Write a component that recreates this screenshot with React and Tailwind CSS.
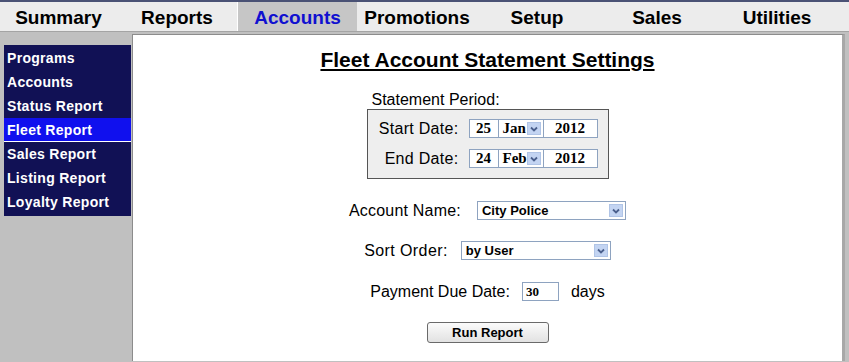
import React from "react";

const tabs = ["Summary", "Reports", "Accounts", "Promotions", "Setup", "Sales", "Utilities"];
const sideLinks = ["Programs", "Accounts", "Status Report", "Fleet Report", "Sales Report", "Listing Report", "Loyalty Report"];

function Arrow() {
  return (
    <span className="absolute right-[2px] top-[2px] bottom-[2px] w-[14px] bg-[#c3d4f2] border border-[#b0c4e6] flex items-center justify-center">
      <svg width="8" height="6" viewBox="0 0 8 6">
        <path d="M1 1.5 L4 4.5 L7 1.5" fill="none" stroke="#4a5f8c" strokeWidth="1.8" />
      </svg>
    </span>
  );
}

function DateRow({ label, day, month, year }) {
  return (
    <div className="flex items-center h-[19px]">
      <span className="w-[81px] whitespace-nowrap text-right text-[16px] leading-[19px] tracking-[0.3px]">{label}</span>
      <div className="ml-[10px] flex h-[19px] font-['Liberation_Serif',serif] font-bold text-[15px] leading-[17px]">
        <span className="w-[30px] border border-[#8ea3c0] bg-white text-center">{day}</span>
        <span className="relative w-[45px] border border-[#8ea3c0] border-l-0 bg-white pl-[4px]">
          {month}
          <Arrow />
        </span>
        <span className="w-[54px] border border-[#8ea3c0] border-l-0 bg-white text-center">{year}</span>
      </div>
    </div>
  );
}

function Select({ value, width }) {
  return (
    <span className={`relative h-[19px] ${width} border border-[#8ea3c0] bg-white pl-[4px] text-[13px] font-bold leading-[17px]`}>
      {value}
      <Arrow />
    </span>
  );
}

export default function App() {
  return (
    <div className="w-[849px] h-[362px] overflow-hidden bg-[#c0c0c0] font-['Liberation_Sans',Arial,sans-serif] text-black">
      <div className="h-[2px] bg-[#4a5275]" />
      <nav className="flex h-[30px] bg-[#ececec] border-b border-[#a4a4a4]">
        {tabs.map((t, i) => (
          <div
            key={t}
            className={
              (i === 0 ? "w-[117px] " : "w-[120px] ") +
              (t === "Accounts" ? "bg-[#c6c6c6] text-[#1010d0] border-l border-white " : "") +
              "flex items-center justify-center pt-[3px] text-[19px] font-bold"
            }
          >
            {t}
          </div>
        ))}
      </nav>
      <div className="flex h-[329px] pt-[2px] pr-[4px]">
        <aside className="w-[132px] pt-[11px] pl-[4px] pr-[1px]">
          <ul className="bg-[#111155] pt-[1px] pb-[2px]">
            {sideLinks.map((s) => (
              <li
                key={s}
                className={
                  (s === "Fleet Report" ? "bg-[#1010ee] border-b border-white " : "") +
                  "h-[24px] flex items-center pl-[3px] pt-[1px] text-white font-bold text-[14px] tracking-[0.3px]"
                }
              >
                {s}
              </li>
            ))}
          </ul>
        </aside>
        <main className="flex-1 flex flex-col items-center bg-white border-l border-t border-[#8c8c8c] border-r-[3px] border-r-[#a8a8a8]">
          <h1 className="mt-[13px] text-[21px] leading-[24px] font-bold underline">Fleet Account Statement Settings</h1>
          <div className="mt-[20px] flex flex-col">
            <span className="pl-[5px] text-[16px] leading-[16px]">Statement Period:</span>
            <div className="mt-[1px] w-[242px] h-[70px] border border-[#555] bg-[#eeeeee] pl-[10px] pt-[9px] flex flex-col gap-[11px]">
              <DateRow label="Start Date:" day="25" month="Jan" year="2012" />
              <DateRow label="End Date:" day="24" month="Feb" year="2012" />
            </div>
          </div>
          <div className="mt-[22px] flex items-center gap-[16px]">
            <span className="text-[16px] leading-[19px] tracking-[0.2px]">Account Name:</span>
            <Select value="City Police" width="w-[149px]" />
          </div>
          <div className="mt-[21px] flex items-center gap-[13px]">
            <span className="text-[16px] leading-[19px] tracking-[0.4px]">Sort Order:</span>
            <Select value="by User" width="w-[150px]" />
          </div>
          <div className="mt-[22px] flex items-center gap-[12px]">
            <span className="text-[16px] leading-[19px]">Payment Due Date:</span>
            <span className="h-[19px] w-[37px] border border-[#8ea3c0] bg-white pl-[3px] font-['Liberation_Serif',serif] font-bold text-[13px] leading-[17px]">30</span>
            <span className="text-[16px] leading-[19px]">days</span>
          </div>
          <button className="mt-[21px] w-[122px] h-[21px] rounded-[3px] border border-[#6a6a6a] bg-gradient-to-b from-[#fbfbfb] to-[#e2e2e2] text-[13px] font-bold leading-[19px]">
            Run Report
          </button>
        </main>
      </div>
    </div>
  );
}
